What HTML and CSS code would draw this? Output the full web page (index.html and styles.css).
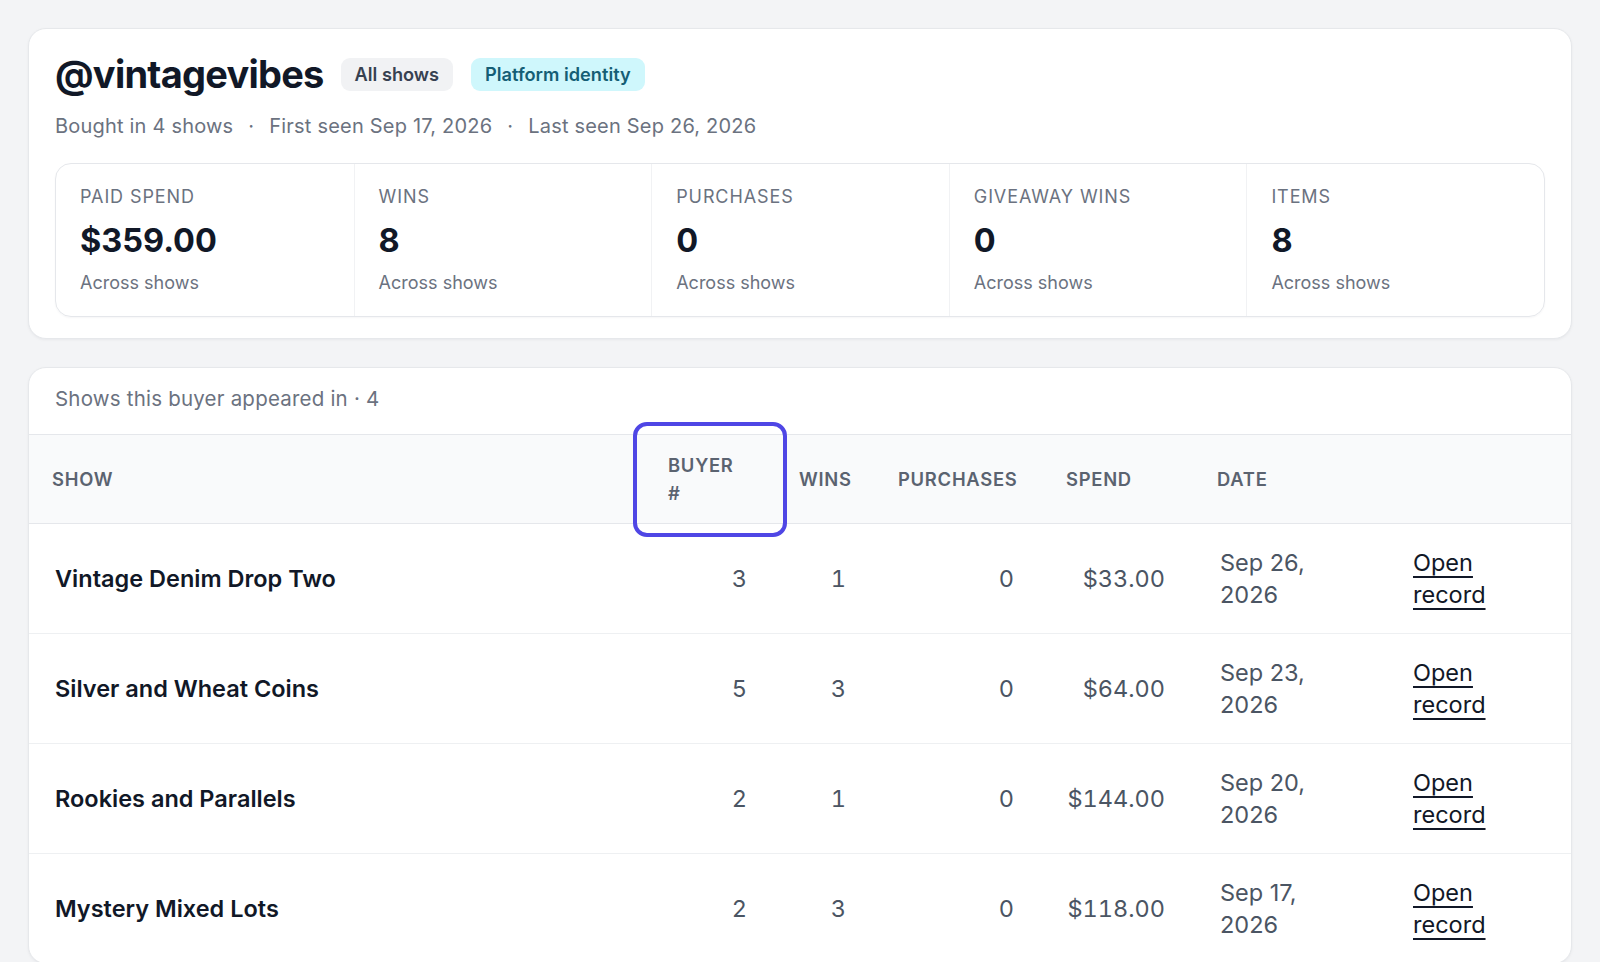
FILE: index.html
```html
<!DOCTYPE html>
<html>

<head>
    <meta charset="utf-8" />
    <title>@vintagevibes - Buyer</title>
    <meta name="viewport" content="width=device-width, initial-scale=1" />
    <link rel="stylesheet" href="styles.css">
</head>

<body>
    <main class="page">
        <section class="card profile">
            <div class="profile-head">
                <h1 class="handle">@vintagevibes</h1>
                <span class="tag tag-muted">All shows</span>
                <span class="tag tag-cyan">Platform identity</span>
            </div>
            <p class="meta">Bought in 4 shows<span class="sep">·</span>First seen Sep 17, 2026<span class="sep">·</span>Last seen Sep 26, 2026</p>

            <div class="stats">
                <div class="stat">
                    <div class="stat-label">Paid spend</div>
                    <div class="stat-value">$359.00</div>
                    <div class="stat-sub">Across shows</div>
                </div>
                <div class="stat">
                    <div class="stat-label">Wins</div>
                    <div class="stat-value">8</div>
                    <div class="stat-sub">Across shows</div>
                </div>
                <div class="stat">
                    <div class="stat-label">Purchases</div>
                    <div class="stat-value">0</div>
                    <div class="stat-sub">Across shows</div>
                </div>
                <div class="stat">
                    <div class="stat-label">Giveaway wins</div>
                    <div class="stat-value">0</div>
                    <div class="stat-sub">Across shows</div>
                </div>
                <div class="stat">
                    <div class="stat-label">Items</div>
                    <div class="stat-value">8</div>
                    <div class="stat-sub">Across shows</div>
                </div>
            </div>
        </section>

        <section class="card shows">
            <div class="shows-caption">Shows this buyer appeared in · 4</div>
            <table class="shows-table">
                <colgroup>
                    <col style="width: 613px">
                    <col style="width: 131px">
                    <col style="width: 99px">
                    <col style="width: 168px">
                    <col style="width: 151px">
                    <col style="width: 196px">
                    <col>
                </colgroup>
                <thead>
                    <tr>
                        <th class="col-show">Show</th>
                        <th class="col-buyer"><span class="wrap-min">Buyer #</span></th>
                        <th>Wins</th>
                        <th>Purchases</th>
                        <th>Spend</th>
                        <th>Date</th>
                        <th></th>
                    </tr>
                </thead>
                <tbody>
                    <tr>
                        <td class="show-name">Vintage Denim Drop Two</td>
                        <td class="num">3</td>
                        <td class="num">1</td>
                        <td class="num">0</td>
                        <td class="num">$33.00</td>
                        <td class="date"><span class="date-wrap">Sep 26, 2026</span></td>
                        <td><a class="open-link" href="#">Open record</a></td>
                    </tr>
                    <tr>
                        <td class="show-name">Silver and Wheat Coins</td>
                        <td class="num">5</td>
                        <td class="num">3</td>
                        <td class="num">0</td>
                        <td class="num">$64.00</td>
                        <td class="date"><span class="date-wrap">Sep 23, 2026</span></td>
                        <td><a class="open-link" href="#">Open record</a></td>
                    </tr>
                    <tr>
                        <td class="show-name">Rookies and Parallels</td>
                        <td class="num">2</td>
                        <td class="num">1</td>
                        <td class="num">0</td>
                        <td class="num">$144.00</td>
                        <td class="date"><span class="date-wrap">Sep 20, 2026</span></td>
                        <td><a class="open-link" href="#">Open record</a></td>
                    </tr>
                    <tr>
                        <td class="show-name">Mystery Mixed Lots</td>
                        <td class="num">2</td>
                        <td class="num">3</td>
                        <td class="num">0</td>
                        <td class="num">$118.00</td>
                        <td class="date"><span class="date-wrap">Sep 17, 2026</span></td>
                        <td><a class="open-link" href="#">Open record</a></td>
                    </tr>
                </tbody>
            </table>
        </section>
    </main>
</body>

</html>
```

FILE: styles.css
```css
body {
    margin: 0;
    background: #f3f4f6;
    font-family: Inter, "Noto Sans", sans-serif;
    color: #111827;
}

.page {
    padding: 28px 28px 0;
    display: flex;
    flex-direction: column;
    gap: 28px;
}

.card {
    background: #fff;
    border: 1px solid #e6e8eb;
    border-radius: 18px;
    box-shadow: 0 1px 3px rgba(17, 24, 39, .05);
}

/* Profile card */
.profile {
    padding: 23px 26px 21px;
}

.profile-head {
    display: flex;
    align-items: center;
    gap: 18px;
    height: 44px;
}

.handle {
    margin: 0 -1px 0 0;
    font-size: 38px;
    line-height: 44px;
    font-weight: 700;
    letter-spacing: -0.02em;
    color: #111827;
}

.tag {
    font-size: 18.2px;
    line-height: 21px;
    font-weight: 600;
    padding: 6px 14px;
    border-radius: 9px;
}

.tag-muted {
    background: #f1f2f4;
    color: #374151;
}

.tag-cyan {
    background: #cff7fc;
    color: #155e75;
}

.meta {
    margin: 17px 0 0;
    font-size: 20px;
    line-height: 27px;
    letter-spacing: .01em;
    color: #6b7280;
}

.meta .sep {
    padding: 0 15px;
}

/* Stats strip */
.stats {
    margin-top: 23px;
    display: grid;
    grid-template-columns: repeat(5, 1fr);
    border: 1px solid #e5e7eb;
    border-radius: 16px;
    box-shadow: 0 1px 2px rgba(17, 24, 39, .04);
}

.stat {
    padding: 21px 24px 20px;
}

.stat + .stat {
    border-left: 1px solid #f1f2f4;
}

.stat-label {
    font-size: 18px;
    line-height: 24px;
    letter-spacing: .05em;
    text-transform: uppercase;
    color: #6b7280;
}

.stat-value {
    margin-top: 12px;
    font-size: 32.5px;
    line-height: 40px;
    font-weight: 700;
    color: #111827;
}

.stat-sub {
    margin-top: 9px;
    font-size: 18px;
    line-height: 26px;
    color: #6b7280;
}

/* Shows table */
.shows-caption {
    padding: 18px 26px 22px;
    font-size: 20.5px;
    line-height: 26px;
    letter-spacing: .01em;
    color: #6b7280;
}

.shows-table {
    width: 100%;
    border-collapse: collapse;
    table-layout: fixed;
}

.shows-table th {
    background: #f9fafb;
    border-top: 1px solid #e5e7eb;
    border-bottom: 1px solid #e5e7eb;
    padding: 16px 26px;
    text-align: left;
    font-size: 18.4px;
    line-height: 28px;
    font-weight: 600;
    letter-spacing: .04em;
    text-transform: uppercase;
    color: #5b6370;
    vertical-align: middle;
}

.shows-table th.col-show {
    padding-left: 23px;
}

.shows-table th.col-buyer {
    position: relative;
}

/* highlight around the Buyer # column header */
.shows-table th.col-buyer::after {
    content: "";
    position: absolute;
    top: -13px;
    bottom: -14px;
    left: -9px;
    right: -14px;
    border: 4.5px solid #4f46e5;
    border-radius: 14px;
    z-index: 1;
}

.wrap-min {
    display: block;
    width: min-content;
}

.shows-table td {
    padding: 22.5px 26px;
    border-bottom: 1px solid #eef0f2;
    font-size: 23.5px;
    line-height: 32px;
    color: #4b5563;
    vertical-align: middle;
}

.shows-table tbody tr:last-child td {
    border-bottom: 0;
}

.shows-table td.show-name {
    font-weight: 600;
    color: #111827;
}

.shows-table td.num {
    text-align: right;
    font-variant-numeric: tabular-nums;
}

.shows-table td.date {
    padding-left: 29px;
}

.date-wrap {
    display: block;
    max-width: 110px;
}

.open-link {
    display: block;
    width: min-content;
    color: #111827;
    text-decoration: underline;
    text-decoration-thickness: 2px;
    text-underline-offset: 5px;
}
```
